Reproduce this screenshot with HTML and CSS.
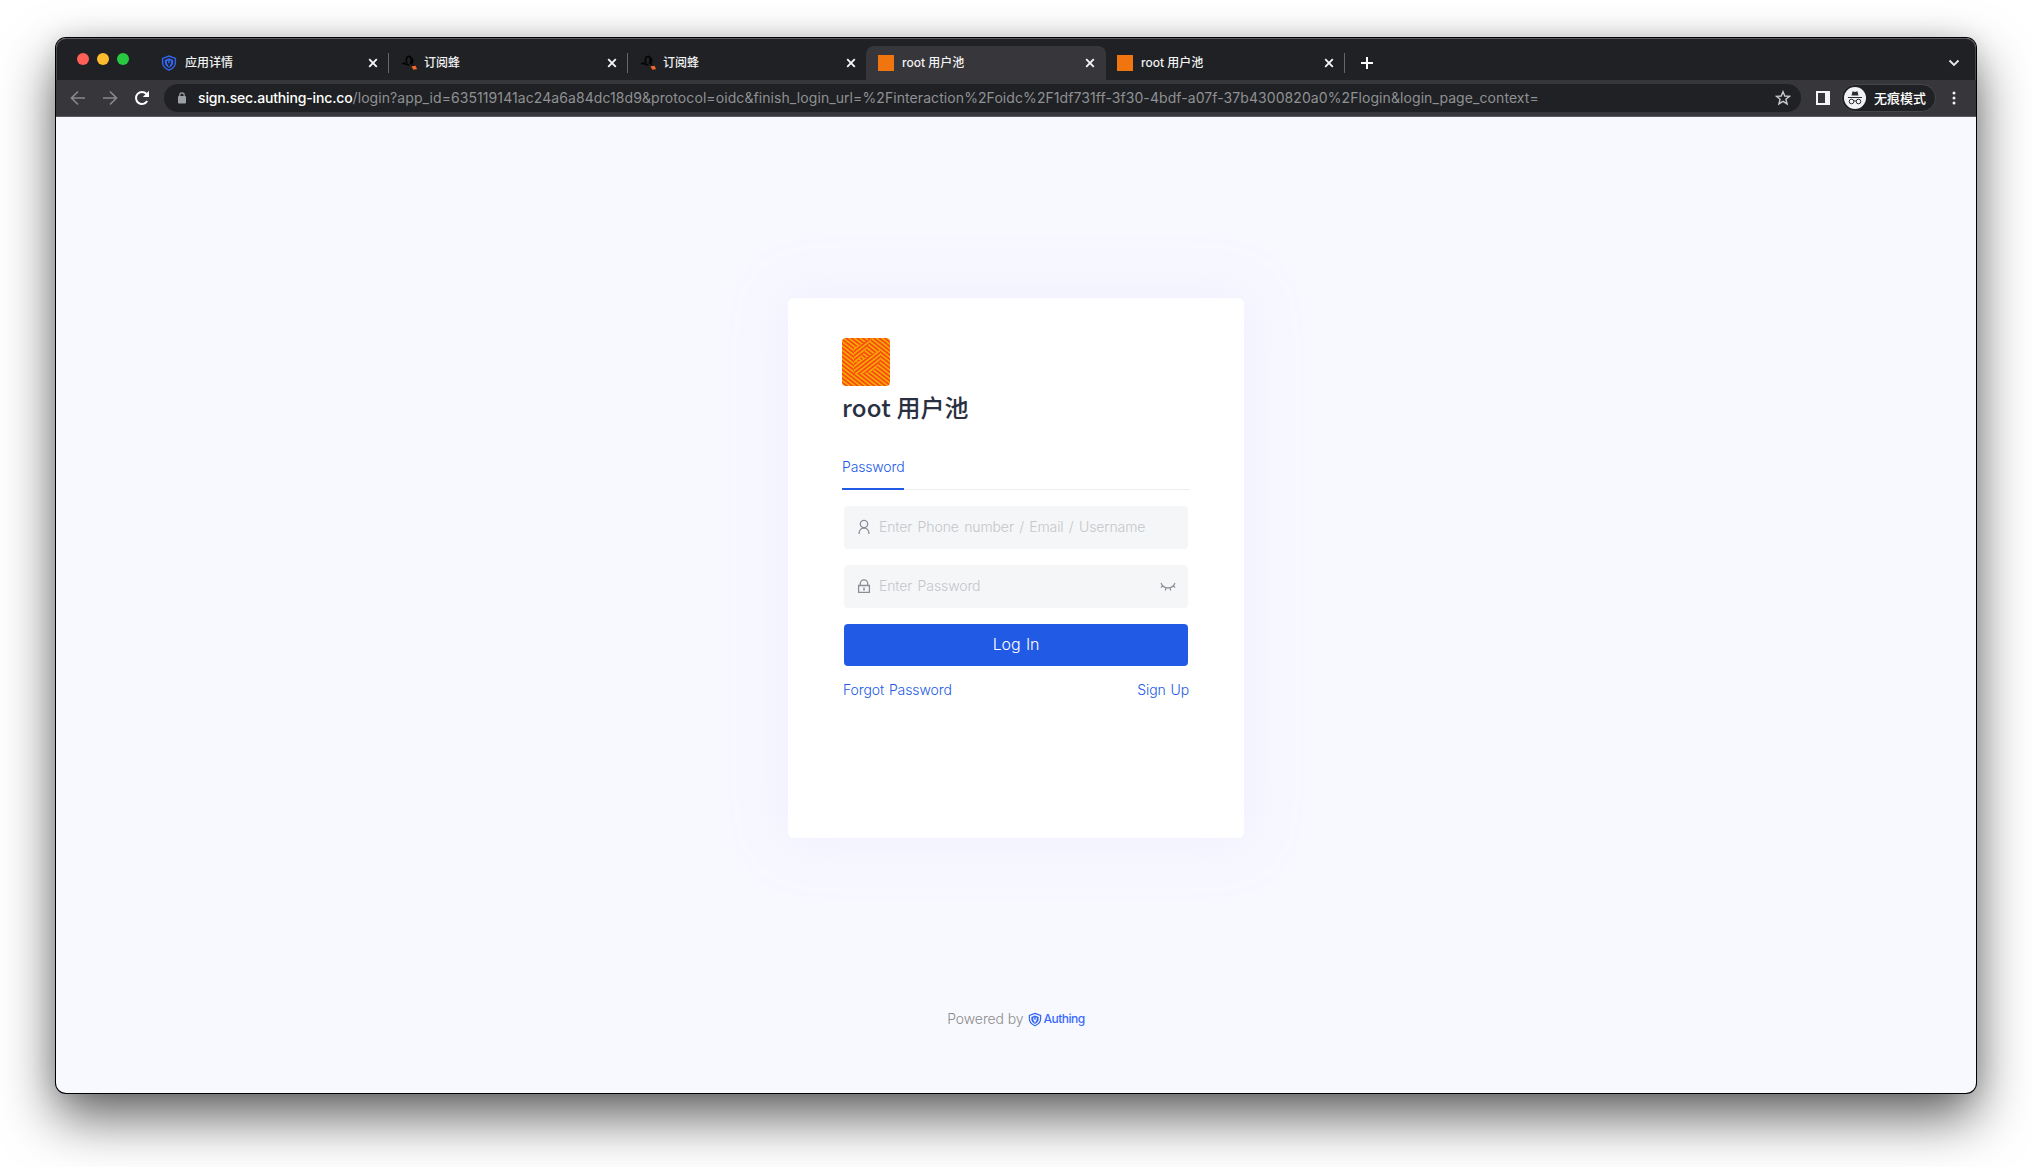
FILE: index.html
```html
<!DOCTYPE html>
<html lang="zh-CN">
<head>
<meta charset="utf-8">
<title>root 用户池</title>
<link rel="stylesheet" href="styles.css">
</head>
<body>
<svg class="defs" width="0" height="0">
  <defs>
    <symbol id="shield" viewBox="0 0 16 16">
      <path d="M8 1 14.400 3.400V7.500Q14.400 12.400 8 15.200 1.600 12.400 1.600 7.500V3.400Z" fill="none" stroke="#3366f0" stroke-width="1.400"/>
      <path d="M8 3.300 12.200 5V7.600Q12.200 10.800 8 13 3.800 10.800 3.800 7.600V5Z" fill="#3366f0"/>
      <path d="M6 6V8.200Q6 9.200 7.200 9.700V11.500H8.800V9.700Q10 9.200 10 8.200V6L8.800 5.500V8.200H7.200V5.500Z" class="keyhole"/>
    </symbol>
    <symbol id="bee" viewBox="0 0 18 18">
      <path d="M1 9.500 3.500 8.500 5 9.800 9 10.500M6.500 9C4.500 5 6 1.500 8.500 1.500S11.500 5 10 9.500M10.500 3C13.500 4 12.500 7.500 11 9.500" fill="none" stroke="#050505" stroke-width="1.700"/>
      <path d="M10.500 9.500 15 11 16.500 16 12 14.500Z" fill="#101010"/>
      <path d="M11 12 15.500 11.500 17 15 13 15.500Z" fill="#f2682a"/>
    </symbol>
    <symbol id="close" viewBox="0 0 10 10"><path d="M1.200 1.200 8.800 8.800M8.800 1.200 1.200 8.800" fill="none" stroke="#f4f5f6" stroke-width="1.900"/></symbol>
  </defs>
</svg>
<div class="window">
  <header class="tabs">
    <div class="lights"><i class="light red"></i><i class="light yellow"></i><i class="light green"></i></div>
    <div class="tab first"><svg class="fav"><use href="#shield"/></svg><span>应用详情</span><svg class="x"><use href="#close"/></svg></div>
    <div class="tab"><svg class="fav bee"><use href="#bee"/></svg><span>订阅蜂</span><svg class="x"><use href="#close"/></svg></div>
    <div class="tab plain"><svg class="fav bee"><use href="#bee"/></svg><span>订阅蜂</span><svg class="x"><use href="#close"/></svg></div>
    <div class="tab active"><i class="fav orange"></i><span>root 用户池</span><svg class="x"><use href="#close"/></svg></div>
    <div class="tab"><i class="fav orange"></i><span>root 用户池</span><svg class="x"><use href="#close"/></svg></div>
    <svg class="plus" viewBox="0 0 12 12"><path d="M6 0V12M0 6H12" stroke="#fff" stroke-width="2"/></svg>
    <svg class="chevron" viewBox="0 0 12 8"><path d="M1.500 1.500 6 6 10.500 1.500" fill="none" stroke="#e8eaed" stroke-width="1.800"/></svg>
  </header>
  <nav class="toolbar">
    <svg class="nav back" viewBox="0 0 16 16"><path d="M15 8H2M8 1.500 1.500 8 8 14.500" fill="none" stroke="#88898c" stroke-width="1.700"/></svg>
    <svg class="nav forward" viewBox="0 0 16 16"><path d="M1 8H14M8 1.500 14.500 8 8 14.500" fill="none" stroke="#88898c" stroke-width="1.700"/></svg>
    <svg class="nav reload" viewBox="0 0 16 16"><path d="M13.200 11A6 6 0 1 1 12.500 4" fill="none" stroke="#fff" stroke-width="2"/><path d="M15 .8V7H8.800Z" fill="#fff"/></svg>
    <div class="address">
      <svg class="lock" viewBox="0 0 8 12"><path d="M1.800 5V3A2.200 2.200 0 0 1 6.200 3V5" fill="none" stroke="#9aa0a6" stroke-width="1.200"/><rect y="4" width="8" height="7.500" rx="1" fill="#9aa0a6"/></svg>
      <span class="url"><b>sign.sec.authing-inc.co</b>/login?app_id=635119141ac24a6a84dc18d9&amp;protocol=oidc&amp;finish_login_url=%2Finteraction%2Foidc%2F1df731ff-3f30-4bdf-a07f-37b4300820a0%2Flogin&amp;login_page_context=</span>
      <svg class="star" viewBox="0 0 16 16"><path d="M8 1.700 9.800 6 14.500 6.300 10.900 9.300 12.100 13.900 8 11.400 3.900 13.900 5.100 9.300 1.500 6.300 6.200 6Z" fill="none" stroke="#c8cacd" stroke-width="1.400"/></svg>
    </div>
    <svg class="panel" viewBox="0 0 14 14"><path d="M0 0H14V14H0ZM2 2V12H9V2Z" fill="#f4f5f6" fill-rule="evenodd"/></svg>
    <div class="incognito">
      <svg class="spy" viewBox="0 0 22 22"><circle cx="11" cy="11" r="11" fill="#f1f3f4"/><path d="M7.500 8.500 8.600 4.300 11 4.900 13.400 4.300 14.500 8.500Z" fill="#2b2c2f"/><path d="M4 10.500H18" stroke="#2b2c2f" stroke-width="1.100"/><g fill="none" stroke="#2b2c2f"><circle cx="7.500" cy="14.500" r="2.300"/><circle cx="14.500" cy="14.500" r="2.300"/><path d="M9.800 14.200Q11 13.500 12.200 14.200"/></g></svg>
      <span>无痕模式</span>
    </div>
    <svg class="dots" viewBox="0 0 4 14"><g fill="#f1f3f4"><circle cx="2" cy="2" r="1.500"/><circle cx="2" cy="7" r="1.500"/><circle cx="2" cy="12" r="1.500"/></g></svg>
  </nav>
  <main class="page">
    <section class="card">
      <svg class="logo" viewBox="0 0 48 48">
        <defs>
          <pattern id="down" width="4" height="3.400" patternUnits="userSpaceOnUse" patternTransform="rotate(38)"><rect width="4" height="3.400" fill="#f2b400"/><rect width="4" height="1.900" fill="#fb4a14"/></pattern>
          <pattern id="up" width="4" height="3.400" patternUnits="userSpaceOnUse" patternTransform="rotate(-38)"><rect width="4" height="3.400" fill="#f2b400"/><rect width="4" height="1.900" fill="#fb4a14"/></pattern>
        </defs>
        <rect width="48" height="48" fill="url(#down)"/>
        <path d="M12 10 30 0 20 18 12 26ZM12 26 38 12V24L30 34 12 36Z" fill="url(#up)"/>
      </svg>
      <h1><span class="latin">root</span> 用户池</h1>
      <div class="methods"><span class="method">Password</span></div>
      <form class="form">
        <label class="field">
          <svg class="lead" viewBox="0 0 14 16"><circle cx="7" cy="5" r="3.700" fill="none" stroke="#8a8e96" stroke-width="1.300"/><path d="M2 15C2 7 12 7 12 15" fill="none" stroke="#8a8e96" stroke-width="1.300"/></svg>
          <span class="ph">Enter Phone number / Email / Username</span>
        </label>
        <label class="field">
          <svg class="lead" viewBox="0 0 14 16"><path d="M1.600 7.500H12.400V14.400H1.600ZM3.300 7.500V5.500A3.700 3.700 0 0 1 10.700 5.500V7.500" fill="none" stroke="#8a8e96" stroke-width="1.300"/><path d="M7 9.500V12.500" stroke="#8a8e96" stroke-width="1.500"/></svg>
          <span class="ph">Enter Password</span>
          <svg class="eye" viewBox="0 0 16 10"><path d="M1 1C3.500 7.500 12.500 7.500 15 1M2.800 4 .8 5.500M13.200 4 15.200 5.500M6 6 5.300 8.500M10 6 10.700 8.500" fill="none" stroke="#8d9096" stroke-width="1.200"/></svg>
        </label>
        <div class="submit">Log In</div>
      </form>
      <div class="links"><span>Forgot Password</span><span>Sign Up</span></div>
    </section>
    <footer class="powered"><span class="by">Powered by</span><svg class="mark"><use href="#shield"/></svg><span class="brand">Authing</span></footer>
  </main>
</div>
</body>
</html>
```
FILE: styles.css
```css
* { box-sizing: border-box; }
body { margin: 0; height: 1167px; padding: 38px 56px 0; background: #fff; overflow: hidden; font-family: Inter, "Noto Sans CJK SC", sans-serif; }
svg { display: block; flex: none; }
.defs { position: absolute; }
.window { width: 1920px; height: 1055px; border-radius: 10px; overflow: hidden; background: #f8f9ff; display: flex; flex-direction: column; box-shadow: 0 0 0 1px #000, 0 24px 54px rgba(0,0,0,.62), 0 0 24px rgba(0,0,0,.12); }

.tabs { height: 42px; flex: none; background: #202124; display: flex; align-items: flex-end; box-shadow: inset 0 1px #5c5d60, inset 1px 0 #48494c, inset -1px 0 #48494c; border-radius: 10px 10px 0 0; }
.lights { width: 94px; height: 42px; padding: 15px 0 0 21px; display: flex; gap: 8px; }
.light { width: 12px; height: 12px; border-radius: 50%; }
.red { background: #ff5f57; }
.yellow { background: #febc2e; }
.green { background: #28c840; }
.tab { width: 239px; height: 34px; display: flex; align-items: center; padding: 0 11px 0 12px; color: #f1f3f4; font-size: 12px; font-weight: 500; background: linear-gradient(#65666a, #65666a) right 7px / 1px 20px no-repeat; }
.tab span { flex: 1; margin-left: 8px; line-height: 18px; }
.tab.first { padding-left: 11px; }
.tab.plain { background: none; width: 238px; padding-right: 10px; }
.tab.active { width: 240px; background: #37363a; border-radius: 8px 8px 0 0; }
.tab.active + .tab { padding-left: 11px; }
.fav { width: 16px; height: 16px; }
.fav.bee { width: 17px; height: 17px; margin-right: -2px; }
.orange { background: #f0750f; }
.keyhole { fill: var(--hole, #202124); }
.x { width: 10px; height: 10px; }
.plus { width: 12px; height: 12px; margin: 0 0 11px 16px; }
.chevron { width: 12px; height: 8px; margin: 0 16px 13px auto; }

.toolbar { height: 37px; flex: none; display: flex; align-items: center; background: #37363a; border-bottom: 1px solid #5b5b5f; padding-left: 14px; }
.nav { width: 16px; height: 16px; }
.forward { margin-left: 16px; }
.reload { margin-left: 16px; }
.address { width: 1637px; height: 28px; margin-left: 14px; border-radius: 14px; background: #202124; display: flex; align-items: center; padding: 0 10px 0 14px; }
.lock { width: 8px; height: 12px; }
.url { flex: 1; margin-left: 12px; font-size: 14px; line-height: 20px; color: #8f9194; white-space: nowrap; letter-spacing: .08px; }
.url b { color: #fff; font-weight: 500; letter-spacing: -.15px; }
.star { width: 16px; height: 16px; }
.panel { width: 14px; height: 14px; margin-left: 15px; }
.incognito { width: 95px; height: 28px; margin-left: 11px; border: 1px solid #45464a; border-radius: 14px; background: #202124; display: flex; align-items: center; padding-left: 2px; color: #fff; font-size: 13px; font-weight: 500; }
.incognito span { margin-left: 8px; line-height: 18px; }
.spy { width: 22px; height: 22px; }
.dots { width: 4px; height: 14px; margin-left: 16px; }

.page { flex: 1; display: flex; flex-direction: column; align-items: center; padding-top: 181px; font-family: Inter, "Noto Sans CJK SC", sans-serif; font-weight: 350; }
.card { width: 456px; height: 540px; flex: none; border-radius: 6px; background: #fff; padding: 40px 54px 0; box-shadow: 0 0 56px 14px rgba(170,160,255,.085); }
.logo { width: 48px; height: 48px; border-radius: 4px; }
h1 { margin: 3px 0 0; font: 500 24px/36px "Noto Sans CJK SC", sans-serif; color: #293042; white-space: nowrap; }
.latin { letter-spacing: .25px; }
.methods { height: 46px; margin-top: 19px; border-bottom: 1px solid #eeeef0; display: flex; font-size: 14px; }
.method { height: 46px; line-height: 45px; color: #215ae5; border-bottom: 2px solid #215ae5; letter-spacing: -.15px; }
.form { display: flex; flex-direction: column; gap: 16px; margin: 16px 2px 0; }
.field { height: 43px; border-radius: 4px; background: #f5f6f8; display: flex; align-items: center; padding: 0 12px 0 13px; font-size: 14px; color: #c4c6ca; }
.lead { width: 14px; height: 16px; margin-bottom: 1px; }
.ph { margin: 0 0 2px 8px; flex: 1; white-space: nowrap; word-spacing: 1.500px; letter-spacing: -.1px; }
.eye { width: 16px; height: 10px; }
.submit { height: 42px; border-radius: 4px; background: #215ae5; color: #fff; font-size: 16px; line-height: 41px; text-align: center; letter-spacing: -.1px; word-spacing: 1px; }
.links { display: flex; justify-content: space-between; margin: 14px 1px 0 1px; font-size: 14px; line-height: 20px; color: #215ae5; letter-spacing: -.1px; word-spacing: 1px; }
.powered { margin-top: 170px; height: 20px; display: flex; align-items: center; color: #8c8c8c; font-size: 14px; }
.by { letter-spacing: -.1px; }
.mark { width: 14px; height: 15px; margin: 2px 0 0 4px; --hole: #f8f9ff; }
.brand { color: #396aff; font: 500 12px/18px Inter, sans-serif; margin: 2px 0 0 2px; letter-spacing: -.5px; }
```
